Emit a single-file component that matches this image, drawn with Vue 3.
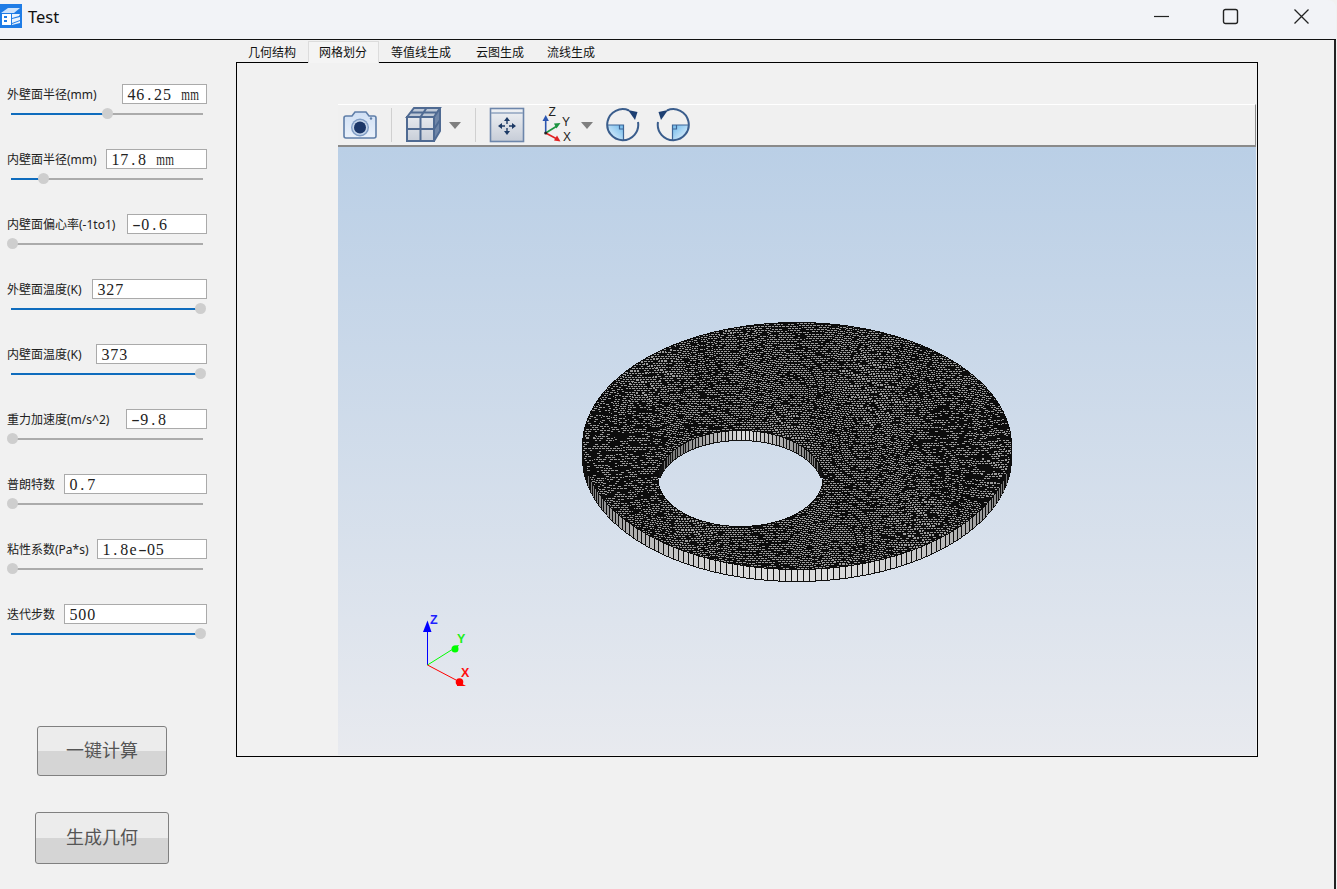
<script setup>
import { ref, onMounted } from 'vue'

const params = [
  { label: '外壁面半径(mm)', value: '46.25 mm', width: 85, pos: 96 },
  { label: '内壁面半径(mm)', value: '17.8 mm', width: 101, pos: 32 },
  { label: '内壁面偏心率(-1to1)', value: '-0.6', width: 80, pos: 1 },
  { label: '外壁面温度(K)', value: '327', width: 115, pos: 189 },
  { label: '内壁面温度(K)', value: '373', width: 111, pos: 189 },
  { label: '重力加速度(m/s^2)', value: '-9.8', width: 81, pos: 1 },
  { label: '普朗特数', value: '0.7', width: 143, pos: 1 },
  { label: '粘性系数(Pa*s)', value: '1.8e-05', width: 110, pos: 1 },
  { label: '迭代步数', value: '500', width: 143, pos: 189 }
]

const tabs = ['几何结构', '网格划分', '等值线生成', '云图生成', '流线生成']

const charClass = (c) => ({ dash: c === '-', narrow: c === 'm' })

const mesh = ref(null)

// disc geometry in screen pixels
const OUTER = { x: 797, y: 446, rx: 215, ry: 124 }
const HOLE = { x: 740.5, y: 478.5, rx: 82, ry: 47.5 }
const ORIGIN_X = 575
const ORIGIN_Y = 315
const W = 445
const H = 270

const inEllipse = (e, x, y, dy = 0) => {
  const a = (x - e.x) / e.rx
  const b = (y - e.y - dy) / e.ry
  return a * a + b * b <= 1
}

const onFace = (x, y) => inEllipse(OUTER, x, y) && !inEllipse(HOLE, x, y)

const hash = (a, b) => {
  const s = Math.sin(a * 12.9898 + b * 78.233) * 43758.5453
  return s - Math.floor(s)
}

// mesh cell of one pixel: a warped brick grid, about 3.5x2 px a cell
function cellOf(x, y) {
  const v = y / 2 + 1.2 * Math.sin(x / 41 + y / 29) + 0.9 * Math.sin(x / 17 - y / 53)
  const row = Math.floor(v)
  const u = x / 3.5 + 0.8 * Math.sin(y / 31 + x / 47) + row * 0.5
  return [row, Math.floor(u)]
}

function shadeOf(x, y, row, col) {
  const xn = (x - OUTER.x) / OUTER.rx
  const angle = Math.atan2((y - OUTER.y) / OUTER.ry, xn)
  const n = hash(row, col)
  let black = 0.08 + 0.16 * Math.abs(xn)
  if (Math.abs(xn) > 0.62 && Math.abs(y - 455) < 48 && Math.sin(angle * 70) > 0.3) black = 0.6
  return n < black ? 12 : 155
}

function wallColumn(e, x, segments) {
  const c = Math.max(-1, Math.min(1, (x + 0.5 - e.x) / e.rx))
  return Math.floor(Math.acos(c) / Math.PI * segments)
}

onMounted(() => {
  const ctx = mesh.value.getContext('2d')
  const img = ctx.createImageData(W, H)
  const put = (px, py, v) => {
    const i = (py * W + px) * 4
    img.data[i] = v
    img.data[i + 1] = v
    img.data[i + 2] = v
    img.data[i + 3] = 255
  }

  for (let py = 0; py < H; py++) {
    for (let px = 0; px < W; px++) {
      const x = px + ORIGIN_X + 0.5
      const y = py + ORIGIN_Y + 0.5
      if (onFace(x, y)) {
        const [row, col] = cellOf(x, y)
        const [rowL, colL] = cellOf(x - 1, y)
        const [rowU, colU] = cellOf(x, y - 1)
        const border = !onFace(x - 1, y) || !onFace(x + 1, y) || !onFace(x, y - 1) || !onFace(x, y + 1)
        const line = rowL !== row || colL !== col || rowU !== row || colU !== col
        put(px, py, border || line ? 12 : shadeOf(x, y, row, col))
      } else if (inEllipse(HOLE, x, y)) {
        if (!inEllipse(HOLE, x, y, 10) && y < HOLE.y) {
          const k = wallColumn(HOLE, px + ORIGIN_X, 64)
          const edge = k !== wallColumn(HOLE, px + ORIGIN_X - 1, 64) || inEllipse(HOLE, x, y + 1, 10)
          const side = Math.abs(x - HOLE.x - 5) / HOLE.rx
          put(px, py, edge ? 20 : 222 - 110 * side)
        }
      } else if (inEllipse(OUTER, x, y, 12) && y > OUTER.y) {
        const k = wallColumn(OUTER, px + ORIGIN_X, 112)
        const edge = k !== wallColumn(OUTER, px + ORIGIN_X - 1, 112) || !inEllipse(OUTER, x, y + 1, 12)
        const s = Math.sqrt(Math.max(0, 1 - ((x - OUTER.x) / OUTER.rx) ** 2))
        put(px, py, edge ? 16 : 90 + 130 * s)
      }
    }
  }
  ctx.putImageData(img, 0, 0)
})
</script>

<template>
  <div class="window">
    <header class="titlebar">
      <svg class="app-icon" width="22" height="24" viewBox="0 0 22 24">
        <rect width="22" height="24" fill="#1f7ce6" />
        <path d="M1 9 8 4h12l-6 5z" fill="#cfe3fb" />
        <path d="M2 10h9v11H2z" fill="#fff" />
        <path d="M4 12h3v2H4zM4 16h3v2H4z" fill="#1f7ce6" />
        <path d="M12 10h8l-1 2-7 2zM12 15l8-2v3l-8 3zM12 20l8-3v2l-8 2z" fill="#eaf3fe" />
      </svg>
      <span class="app-title">Test</span>
      <div class="win-controls">
        <button class="win-btn">
          <svg width="17" height="17" viewBox="0 0 17 17"><path d="M1 8.500h15" stroke="#222" stroke-width="1.200" /></svg>
        </button>
        <button class="win-btn">
          <svg width="17" height="17" viewBox="0 0 17 17"><rect x="1.500" y="1.500" width="14" height="14" rx="2" fill="none" stroke="#222" stroke-width="1.400" /></svg>
        </button>
        <button class="win-btn">
          <svg width="17" height="17" viewBox="0 0 17 17"><path d="M1.500 1.500l14 14M15.500 1.500l-14 14" stroke="#222" stroke-width="1.300" /></svg>
        </button>
      </div>
    </header>

    <div class="content">
      <aside class="side">
        <div v-for="p in params" :key="p.label" class="param">
          <div class="param-head">
            <label class="param-label">{{ p.label }}</label>
            <div class="param-input" :style="{ width: p.width + 'px' }"><span v-for="(c, i) in p.value" :key="i" class="ch" :class="charClass(c)">{{ c }}</span></div>
          </div>
          <div class="slider">
            <div class="slider-fill" :style="{ width: p.pos + 'px' }"></div>
            <div class="slider-handle" :style="{ left: p.pos - 5 + 'px' }"></div>
          </div>
        </div>
        <div class="actions">
          <button class="action action-calc">一键计算</button>
          <button class="action action-geo">生成几何</button>
        </div>
      </aside>

      <main class="main">
        <nav class="tabs">
          <div v-for="(t, i) in tabs" :key="t" class="tab" :class="{ active: i === 1 }">{{ t }}</div>
        </nav>
        <div class="frame">
          <div class="viewer">
            <div class="toolbar">
              <svg class="icon" width="38" height="40" viewBox="0 0 38 40">
                <defs>
                  <linearGradient id="camBody" x1="0" y1="0" x2="0" y2="1">
                    <stop offset="0" stop-color="#cfdff4" />
                    <stop offset="1" stop-color="#eaf1fa" />
                  </linearGradient>
                </defs>
                <path d="M4 11h6l3-4h11l3 4h5a2 2 0 0 1 2 2v18a2 2 0 0 1-2 2H4a2 2 0 0 1-2-2V13a2 2 0 0 1 2-2z" fill="url(#camBody)" stroke="#5f7ea8" stroke-width="1.600" />
                <circle cx="18" cy="22.500" r="9" fill="#7f9cc4" />
                <circle cx="18" cy="22.500" r="7.600" fill="#c5d5ea" />
                <circle cx="18" cy="22.500" r="6" fill="#1c3768" />
                <circle cx="29" cy="13.500" r="1.200" fill="#5f7ea8" />
              </svg>
              <div class="sep"></div>
              <svg class="icon gap-cube" width="38" height="40" viewBox="0 0 38 40">
                <defs>
                  <linearGradient id="cubeFace" x1="0" y1="0" x2="0" y2="1">
                    <stop offset="0" stop-color="#e6e9ee" />
                    <stop offset="1" stop-color="#c8ced8" />
                  </linearGradient>
                </defs>
                <path d="M2 12 9 3h26l-6 9z" fill="#bfc9d7" />
                <path d="M29 12l6-9v23l-6 10z" fill="#6f86a8" />
                <path d="M2 12h27v24H2z" fill="url(#cubeFace)" />
                <path d="M2 12 9 3h26l-6 9zM2 12h27v24H2zM29 36l6-10V3M15.500 12v24M2 24h27M15.500 12l6-9M5.500 7.500h26M29 24l6-9" fill="none" stroke="#4f6a92" stroke-width="2" />
              </svg>
              <div class="drop gap-drop"></div>
              <div class="sep gap-sep"></div>
              <svg class="icon gap-fit" width="38" height="40" viewBox="0 0 38 40">
                <defs>
                  <linearGradient id="fitBody" x1="0" y1="0" x2="0" y2="1">
                    <stop offset="0" stop-color="#f0f2f5" />
                    <stop offset="1" stop-color="#c6ccd7" />
                  </linearGradient>
                </defs>
                <rect x="2.500" y="3.500" width="33" height="33" fill="url(#fitBody)" stroke="#6d86ab" stroke-width="1.600" />
                <path d="M3 8h32" stroke="#8fa3bf" stroke-width="1.500" />
                <path d="M19 15v4M19 23v4M13 21h4M21 21h4" stroke="#1d3a66" stroke-width="1.400" />
                <path d="M19 12l-3 4h6zM19 30l-3-4h6zM10 21l4-3v6zM28 21l-4-3v6z" fill="#1d3a66" />
              </svg>
              <svg class="icon gap-axes" width="32" height="40" viewBox="0 0 32 40">
                <path d="M4.700 28V13" stroke="#2a55b0" stroke-width="1.600" />
                <path d="M4.700 10l-3.200 6h6.400z" fill="#2a55b0" />
                <path d="M4.700 28 16 21" stroke="#1c9440" stroke-width="1.600" />
                <path d="M19.500 18l-6.500.5 2.500 5z" fill="#1c9440" />
                <path d="M4.700 28 16 34" stroke="#e02222" stroke-width="1.600" />
                <path d="M19.500 36.500l-3.500-6-3 5z" fill="#e02222" />
                <circle cx="4.700" cy="28" r="1.500" fill="#222" />
                <text x="7.500" y="11" class="axis-label">Z</text>
                <text x="21" y="21" class="axis-label">Y</text>
                <text x="22" y="36" class="axis-label">X</text>
              </svg>
              <div class="drop gap-drop2"></div>
              <svg class="icon gap-rot" width="36" height="40" viewBox="0 0 36 40">
                <defs>
                  <linearGradient id="rotFill" x1="0" y1="1" x2="1" y2="0">
                    <stop offset="0" stop-color="#eef7fe" />
                    <stop offset="1" stop-color="#6db8ea" />
                  </linearGradient>
                </defs>
                <path d="M17.500 20H2A15.500 15.500 0 0 0 17.500 35.500z" fill="url(#rotFill)" />
                <path d="M2 20h15.500v15.500M13.500 20v4h4" fill="none" stroke="#3c6495" stroke-width="1.200" />
                <path d="M32 17A15.500 15.500 0 1 1 23 5.500" fill="none" stroke="#3a5d8c" stroke-width="2" />
                <path d="M22 5 31.500 7 29 15z" fill="#1d3f72" />
              </svg>
              <svg class="icon gap-rot2 mirror" width="36" height="40" viewBox="0 0 36 40">
                <path d="M17.500 20H2A15.500 15.500 0 0 0 17.500 35.500z" fill="url(#rotFill)" />
                <path d="M2 20h15.500v15.500M13.500 20v4h4" fill="none" stroke="#3c6495" stroke-width="1.200" />
                <path d="M32 17A15.500 15.500 0 1 1 23 5.500" fill="none" stroke="#3a5d8c" stroke-width="2" />
                <path d="M22 5 31.500 7 29 15z" fill="#1d3f72" />
              </svg>
            </div>
            <div class="scene">
              <canvas ref="mesh" class="mesh" width="445" height="270"></canvas>
              <svg class="triad" width="60" height="80" viewBox="415 610 60 80">
                <path d="M427.500 665V628" stroke="#0000ff" stroke-width="1" />
                <path d="M427.500 620.500l-4.500 11.500h8.500z" fill="#0000ff" />
                <path d="M427.500 665 453 649" stroke="#00ff00" stroke-width="1" />
                <circle cx="455" cy="649" r="3.500" fill="#00ff00" />
                <path d="M459 645l-6 1 2 6z" fill="#00ff00" />
                <path d="M427.500 665 456 680" stroke="#ff0000" stroke-width="1" />
                <circle cx="459.500" cy="682" r="3.800" fill="#ff0000" />
                <path d="M466 686h-9l0-5z" fill="#ff0000" />
                <text x="430" y="624" class="triad-label" fill="#2020ff">Z</text>
                <text x="457" y="643" class="triad-label" fill="#20ee20">Y</text>
                <text x="461" y="677" class="triad-label" fill="#ff1010">X</text>
              </svg>
            </div>
          </div>
        </div>
      </main>
    </div>
  </div>
</template>

<style scoped>
.window {
  width: 1337px;
  height: 889px;
  display: flex;
  flex-direction: column;
  background: #f1f1f1;
  font-family: "Noto Sans", "Noto Sans CJK SC", sans-serif;
  overflow: hidden;
}

.titlebar {
  height: 39px;
  width: 1336px;
  flex: none;
  display: flex;
  align-items: flex-start;
  background: #f2f3f7;
  border-bottom: 1px solid #111;
  border-top-right-radius: 8px;
}

.app-icon {
  margin-top: 4px;
}

.app-title {
  margin-left: 6px;
  margin-top: 5px;
  font-size: 16.500px;
  line-height: 24px;
  color: #111;
}

.win-controls {
  margin-left: auto;
  display: flex;
}

.win-btn {
  width: 70px;
  height: 33px;
  padding: 0;
  border: none;
  background: none;
  display: flex;
  align-items: center;
  justify-content: center;
}

.win-btn:nth-child(2) {
  margin: 0 1px 0 -1px;
}

.content {
  flex: 1;
  width: 1336px;
  display: flex;
  border-right: 2px solid #222;
  min-height: 0;
  box-sizing: border-box;
}

.side {
  width: 204px;
  margin-right: 32px;
  flex: none;
  padding-top: 44px;
  display: flex;
  flex-direction: column;
}

.param {
  width: 200px;
  margin-left: 7px;
  height: 65px;
  flex: none;
}

.param-head {
  height: 20px;
  display: flex;
  align-items: center;
  justify-content: space-between;
}

.param-label {
  font-size: 12px;
  color: #222;
  white-space: nowrap;
}

.param-input {
  height: 20px;
  box-sizing: border-box;
  padding: 1px 0 0 4px;
  border: 1px solid #aaa;
  background: #fff;
  font-family: "Liberation Serif", "Noto Sans CJK SC", serif;
  font-size: 16px;
  line-height: 18px;
  color: #222;
  display: flex;
}

.ch {
  width: 8.900px;
  flex: none;
  text-align: center;
  white-space: pre;
}

.ch.dash {
  transform: scaleX(1.600);
}

.ch.narrow {
  transform: scaleX(0.700);
}

.slider {
  position: relative;
  width: 192px;
  height: 2px;
  margin: 9px 0 0 4px;
  background: #ababab;
}

.slider-fill {
  height: 2px;
  background: #0f6cbd;
}

.slider-handle {
  position: absolute;
  top: -5px;
  width: 11px;
  height: 11px;
  border-radius: 50%;
  background: #cecece;
}

.actions {
  margin-top: 57px;
  display: flex;
  flex-direction: column;
  align-items: center;
}

.action {
  box-sizing: border-box;
  padding: 0 0 4px;
  border: 1px solid #808080;
  border-radius: 3px;
  background: linear-gradient(to bottom, #ececec 0 50%, #d5d5d5 50% 100%);
  font-family: "Noto Sans CJK SC", sans-serif;
  font-size: 18px;
  color: #555;
}

.action-calc {
  width: 130px;
  height: 50px;
}

.action-geo {
  width: 134px;
  height: 52px;
  margin-top: 36px;
}

.main {
  width: 1022px;
  flex: none;
  display: flex;
  flex-direction: column;
}

.tabs {
  height: 22px;
  padding-left: 1px;
  display: flex;
  align-items: flex-end;
}

.tab {
  height: 21px;
  width: 71px;
  box-sizing: border-box;
  padding-left: 11px;
  font-size: 12px;
  line-height: 23px;
  color: #111;
  white-space: nowrap;
}

.tab:nth-child(3) {
  width: 86px;
  padding-left: 12px;
}

.tab.active {
  height: 22px;
  margin-bottom: -1px;
  position: relative;
  background: #f4f4f4;
  box-shadow: inset 1px 0 #dcdcdc, inset -1px 0 #dcdcdc, inset 0 1px #dcdcdc;
}

.frame {
  height: 695px;
  box-sizing: border-box;
  border: 1px solid #000;
  padding: 41px 1px 1px 101px;
  display: flex;
}

.viewer {
  flex: 1;
  display: flex;
  flex-direction: column;
}

.toolbar {
  height: 43px;
  flex: none;
  box-sizing: border-box;
  border-top: 1px solid #fff;
  border-bottom: 2px solid #8a8a8a;
  border-right: 1px solid #8a8a8a;
  padding-left: 4px;
  display: flex;
  align-items: center;
  background: #f0f0f0;
}

.icon {
  flex: none;
}

.mirror {
  transform: scaleX(-1);
}

.sep {
  width: 1px;
  height: 34px;
  margin-left: 11px;
  background: #d0d0d0;
}

.gap-cube {
  margin-left: 13px;
}

.gap-fit {
  margin-left: 12px;
}

.drop {
  width: 0;
  height: 0;
  border-left: 6px solid transparent;
  border-right: 6px solid transparent;
  border-top: 7px solid #7f7f7f;
}

.gap-drop {
  margin-left: 6px;
}

.gap-sep {
  margin-left: 14px;
}

.gap-axes {
  margin-left: 15px;
}

.gap-drop2 {
  margin-left: 8px;
}

.gap-rot {
  margin-left: 13px;
}

.gap-rot2 {
  margin-left: 12px;
}

.axis-label {
  font-family: "Liberation Sans", sans-serif;
  font-size: 12px;
  fill: #222;
}

.scene {
  position: relative;
  flex: 1;
  background: linear-gradient(to bottom, #bacfe6, #e8eaef);
}

.mesh {
  position: absolute;
  left: 237px;
  top: 168px;
}

.triad {
  position: absolute;
  left: 77px;
  top: 463px;
}

.triad-label {
  font-family: "Liberation Sans", sans-serif;
  font-size: 12.500px;
  font-weight: 700;
}
</style>

<style>
html,
body {
  background: #fff;
}
</style>
